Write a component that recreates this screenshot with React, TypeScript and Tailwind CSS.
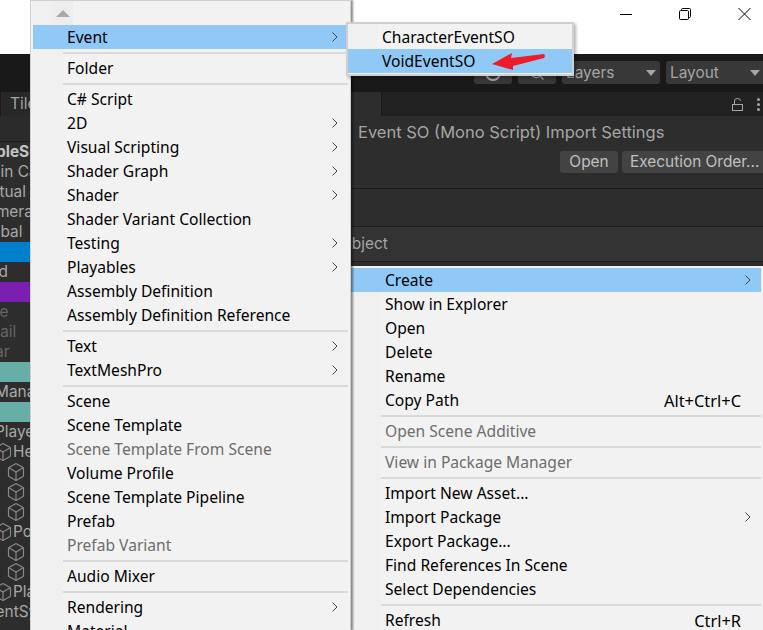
import { Box, Search } from "lucide-react"

type Entry =
  | { sep: true }
  | { label: string; arrow?: boolean; active?: boolean; disabled?: boolean; shortcut?: string }

const SEP: Entry = { sep: true }

const createItems: Entry[] = [
  { label: "Event", arrow: true, active: true },
  SEP,
  { label: "Folder" },
  SEP,
  { label: "C# Script" },
  { label: "2D", arrow: true },
  { label: "Visual Scripting", arrow: true },
  { label: "Shader Graph", arrow: true },
  { label: "Shader", arrow: true },
  { label: "Shader Variant Collection" },
  { label: "Testing", arrow: true },
  { label: "Playables", arrow: true },
  { label: "Assembly Definition" },
  { label: "Assembly Definition Reference" },
  SEP,
  { label: "Text", arrow: true },
  { label: "TextMeshPro", arrow: true },
  SEP,
  { label: "Scene" },
  { label: "Scene Template" },
  { label: "Scene Template From Scene", disabled: true },
  { label: "Volume Profile" },
  { label: "Scene Template Pipeline" },
  { label: "Prefab" },
  { label: "Prefab Variant", disabled: true },
  SEP,
  { label: "Audio Mixer" },
  SEP,
  { label: "Rendering", arrow: true },
  { label: "Material" },
]

const contextItems: Entry[] = [
  { label: "Create", arrow: true, active: true },
  { label: "Show in Explorer" },
  { label: "Open" },
  { label: "Delete" },
  { label: "Rename" },
  { label: "Copy Path", shortcut: "Alt+Ctrl+C" },
  SEP,
  { label: "Open Scene Additive", disabled: true },
  SEP,
  { label: "View in Package Manager", disabled: true },
  SEP,
  { label: "Import New Asset..." },
  { label: "Import Package", arrow: true },
  { label: "Export Package..." },
  { label: "Find References In Scene" },
  { label: "Select Dependencies" },
  SEP,
  { label: "Refresh", shortcut: "Ctrl+R" },
]

const eventItems: Entry[] = [
  { label: "CharacterEventSO" },
  { label: "VoidEventSO", active: true },
]

function Chevron() {
  return (
    <svg width="6" height="10" viewBox="0 0 6 10" className="shrink-0" fill="none" stroke="#444" strokeWidth="1">
      <path d="M0.5 0.5 L5 5 L0.5 9.5" />
    </svg>
  )
}

function MenuList({ items, arrowPad, shortcutPad }: { items: Entry[]; arrowPad: string; shortcutPad?: string }) {
  return (
    <>
      {items.map((item, i) => {
        if ("sep" in item) {
          return (
            <div key={i} className="flex h-[7px] shrink-0">
              <div className="w-[30px] bg-[#f0f0f0]" />
              <div className="flex flex-1 items-center">
                <div className="h-[2px] w-full bg-[#d9d9d9]" />
              </div>
            </div>
          )
        }
        return (
          <div key={i} className={`flex h-6 shrink-0 items-center ${item.active ? "bg-[#90c8f6]" : ""}`}>
            <div className={`h-full w-[30px] shrink-0 ${item.active ? "" : "bg-[#f0f0f0]"}`} />
            <div className={`flex h-full flex-1 items-center justify-between pl-1 ${item.arrow ? arrowPad : shortcutPad ?? ""}`}>
              <span className={`block pt-[2px] ${item.disabled ? "text-[#6d6d6d]" : "text-[#000]"}`}>{item.label}</span>
              {item.arrow && <Chevron />}
              {item.shortcut && <span className="block pt-[2px] text-[16.4px] text-[#000]">{item.shortcut}</span>}
            </div>
          </div>
        )
      })}
    </>
  )
}

function Caret() {
  return <div className="size-0 border-x-[5px] border-t-[6px] border-x-transparent border-t-[#a5a5a5]" />
}

const rows = [
  { text: "TableScene", indent: "-ml-[22px]", cls: "font-bold text-[#c4c4c4]" },
  { text: "Main Camera", indent: "-ml-[22px]" },
  { text: "Virtual Camera", indent: "-ml-[21px]" },
  { text: "Camera", indent: "-ml-[24px]" },
  { text: "Global", indent: "-ml-[24px]" },
  { text: "", bar: "bg-[#0080cc]" },
  { text: "Ground", indent: "-ml-[46px]" },
  { text: "", bar: "bg-[#7a1fb0]" },
  { text: "Game", indent: "-ml-[34px]", cls: "text-[#666]" },
  { text: "Detail", indent: "-ml-[25px]", cls: "text-[#666]" },
  { text: "Bar", indent: "-ml-[15px]", cls: "text-[#666]" },
  { text: "", bar: "bg-[#67aea6]" },
  { text: "Manager", indent: "-ml-[5px]" },
  { text: "", bar: "bg-[#67aea6]" },
  { text: "Player", indent: "-ml-[5px]" },
]

const cubes = [
  { text: "Head", parent: true },
  { cube: true },
  { cube: true },
  { cube: true },
  { text: "Pos", parent: true },
  { cube: true },
  { cube: true },
  { text: "Player", parent: true },
]

export default function App() {
  return (
    <div className="relative flex h-[630px] w-[763px] flex-col overflow-hidden bg-white font-['Noto_Sans',sans-serif]">
      {/* title bar */}
      <div className="flex h-[54px] shrink-0 items-start bg-white">
        <div className="ml-auto mr-[12px] mt-[8px] flex items-center gap-[47px]">
          <div className="h-px w-[12px] bg-black" />
          <svg width="12" height="12" viewBox="0 0 12 12" fill="none" stroke="#000" strokeWidth="1">
            <rect x="0.5" y="2.5" width="9" height="9" rx="1" />
            <path d="M2.5 2.5 V1.5 a1 1 0 0 1 1-1 H10.5 a1 1 0 0 1 1 1 V8.5 a1 1 0 0 1-1 1 H9.5" />
          </svg>
          <svg width="13" height="12" viewBox="0 0 13 12" fill="none" stroke="#000" strokeWidth="1">
            <path d="M0.5 0 L12.5 12 M12.5 0 L0.5 12" />
          </svg>
        </div>
      </div>

      {/* unity toolbar */}
      <div className="flex h-[38px] shrink-0 items-start justify-end gap-[6px] bg-[#191919] pt-[7px] font-['Inter',sans-serif] text-[15.4px] text-[#a5a5a5]">
        <div className="flex h-[23px] w-[38px] items-center justify-center rounded-[3px] bg-[#383838]">
          <div className="size-[16px] rounded-full border-2 border-[#a5a5a5]" />
        </div>
        <div className="flex h-[23px] w-[38px] items-center justify-center rounded-[3px] bg-[#383838]">
          <Search size={16} />
        </div>
        <div className="flex h-[23px] w-[98px] items-center justify-between rounded-[3px] bg-[#383838] pl-1 pr-[4px]">
          Layers
          <Caret />
        </div>
        <div className="flex h-[23px] w-[97px] items-center justify-between rounded-l-[3px] bg-[#383838] pl-1 pr-[3px]">
          Layout
          <Caret />
        </div>
      </div>

      <div className="flex min-h-0 flex-1 bg-[#2d2d2d]">
        {/* hierarchy */}
        <div className="w-[30px] shrink-0 overflow-hidden font-['Inter',sans-serif] text-[15.4px] text-[#a8a8a8]">
          <div className="flex h-6 bg-[#282828]">
            <div className="w-[2px] border-r border-[#191919]" />
            <div className="whitespace-nowrap pl-[9px] leading-6 text-[#a5a5a5]">Tiles</div>
          </div>
          <div className="h-[26px] border-b border-[#1c1c1c] bg-[#2b2b2b]" />
          {rows.map((r, i) =>
            r.bar ? (
              <div key={i} className={`h-5 ${r.bar}`} />
            ) : (
              <div key={i} className={`h-5 whitespace-nowrap leading-5 ${r.indent} ${r.cls ?? ""}`}>
                {r.text}
              </div>
            ),
          )}
          {cubes.map((c, i) =>
            c.cube ? (
              <div key={i} className="flex h-5 items-center pl-[6px] text-[#8a8a8a]">
                <Box size={20} strokeWidth={1.4} />
              </div>
            ) : (
              <div key={i} className="-ml-[7px] flex h-5 items-center whitespace-nowrap leading-5 text-[#a8a8a8]">
                <span className="text-[#8a8a8a]">
                  <Box size={20} strokeWidth={1.4} />
                </span>
                {c.text}
              </div>
            ),
          )}
          <div className="-ml-[22px] h-5 whitespace-nowrap leading-5">EventSystem</div>
        </div>

        {/* inspector */}
        <div className="flex min-w-0 flex-1 flex-col font-['Inter',sans-serif] text-[#a5a5a5]">
          <div className="flex h-6 shrink-0 items-center bg-[#222]">
            <div className="h-full w-[352px] border-r border-[#191919] bg-[#2d2d2d]" />
            <div className="ml-auto flex items-center gap-[14px] pr-[3px]">
              <svg width="11" height="13" viewBox="0 0 11 13" fill="none" stroke="#a5a5a5" strokeWidth="1">
                <rect x="0.5" y="6.5" width="10" height="6" />
                <path d="M2.5 6.5 V3 a3 2.5 0 0 1 6 0" />
              </svg>
              <div className="flex flex-col gap-[2px]">
                <div className="size-[3px] rounded-full bg-[#a5a5a5]" />
                <div className="size-[3px] rounded-full bg-[#a5a5a5]" />
                <div className="size-[3px] rounded-full bg-[#a5a5a5]" />
              </div>
            </div>
          </div>
          <div className="h-[73px] shrink-0 border-b border-[#1c1c1c] bg-[#2d2d2d]">
            <div className="whitespace-nowrap pl-[328px] pt-[4px] text-[16.5px] leading-6">Event SO (Mono Script) Import Settings</div>
            <div className="mt-[7px] flex justify-end gap-1 text-[15.4px]">
              <div className="flex h-[22px] w-[58px] items-center justify-center rounded-[3px] bg-[#434343] text-[#c0c0c0]">Open</div>
              <div className="flex h-[22px] w-[141px] items-center whitespace-nowrap rounded-l-[3px] bg-[#434343] pl-2 text-[#c0c0c0]">Execution Order...</div>
            </div>
          </div>
          <div className="h-[38px] shrink-0 border-b border-[#1c1c1c] bg-[#2d2d2d]" />
          <div className="h-[35px] shrink-0 border-b border-[#1c1c1c] bg-[#333] pl-[310px] text-[15.4px] leading-[34px]">Object</div>
          <div className="flex-1 bg-[#2d2d2d]" />
        </div>
      </div>

      {/* asset context menu */}
      <div className="absolute left-[351px] top-[266px] flex h-[364px] w-[412px] flex-col overflow-hidden bg-[#f2f2f2] pr-[2px] pt-[2px] text-[15.6px]">
        <MenuList items={contextItems} arrowPad="pr-[10px]" shortcutPad="pr-[20px]" />
      </div>

      {/* Create submenu */}
      <div className="absolute left-[30px] top-0 flex h-[630px] w-[321px] flex-col overflow-hidden border-x-[1px] border-t-[1px] border-[#cfcfcf] bg-[#f2f2f2] px-[2px] text-[15.6px] shadow-[2px_0_2px_rgba(0,0,0,0.45)]">
        <div className="flex h-6 shrink-0">
          <div className="flex h-full w-[30px] bg-[#f0f0f0]">
            <div className="ml-[19px] flex h-full w-[21px] shrink-0 items-center justify-center bg-[#ededed]">
              <div className="size-0 border-x-[7px] border-b-[7px] border-x-transparent border-b-[#a9a9a9]" />
            </div>
          </div>
        </div>
        <MenuList items={createItems} arrowPad="pr-[10px]" />
      </div>

      {/* Event submenu */}
      <div className="absolute left-[346px] top-[22px] flex w-[228px] flex-col border-2 border-[#d0d0d0] bg-[#f2f2f2] py-px text-[15.6px] shadow-[2px_2px_3px_rgba(0,0,0,0.3)]">
        <MenuList items={eventItems} arrowPad="" />
        <svg width="56" height="20" viewBox="0 0 56 20" className="absolute left-[144px] top-[27px]">
          <polygon points="0,13 20,2 19,7 52,3 53,5 52,7 21,15 21,19" fill="#ec1c2c" />
        </svg>
      </div>
    </div>
  )
}
